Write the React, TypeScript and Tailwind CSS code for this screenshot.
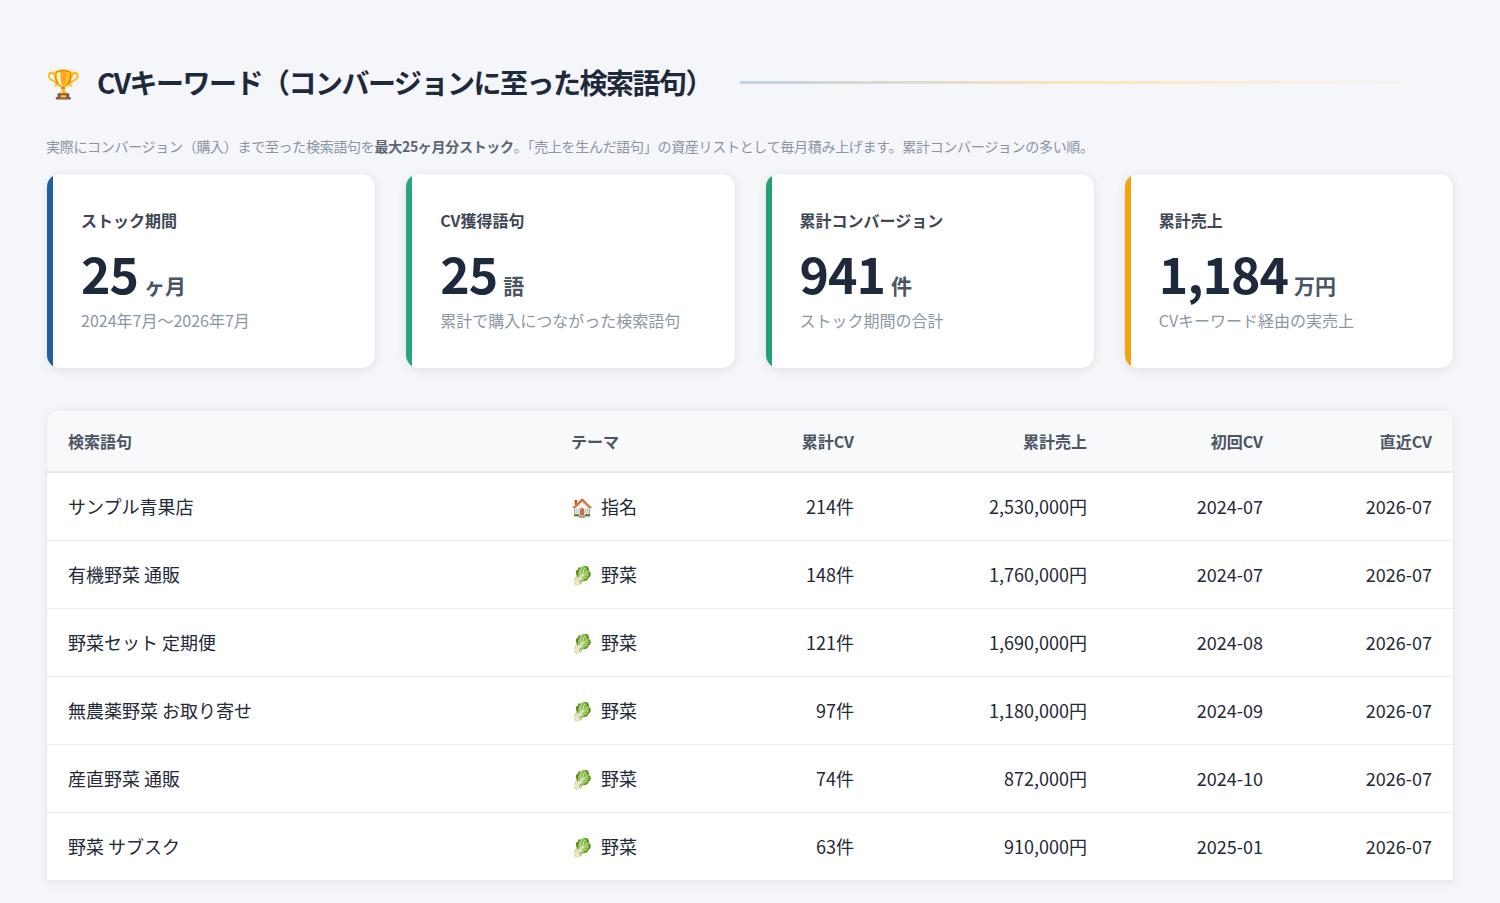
import React from "react";

const cards = [
  { label: "ストック期間", value: "25", unit: "ヶ月", sub: "2024年7月〜2026年7月", color: "bg-[#1d5fa0]" },
  { label: "CV獲得語句", value: "25", unit: "語", sub: "累計で購入につながった検索語句", color: "bg-[#2aa57a]" },
  { label: "累計コンバージョン", value: "941", unit: "件", sub: "ストック期間の合計", color: "bg-[#23a06f]" },
  { label: "累計売上", value: "1,184", unit: "万円", sub: "CVキーワード経由の実売上", color: "bg-[#f0a30a]" },
];

const rows = [
  ["サンプル青果店", "🏠", "指名", "214件", "2,530,000円", "2024-07", "2026-07"],
  ["有機野菜 通販", "🥬", "野菜", "148件", "1,760,000円", "2024-07", "2026-07"],
  ["野菜セット 定期便", "🥬", "野菜", "121件", "1,690,000円", "2024-08", "2026-07"],
  ["無農薬野菜 お取り寄せ", "🥬", "野菜", "97件", "1,180,000円", "2024-09", "2026-07"],
  ["産直野菜 通販", "🥬", "野菜", "74件", "872,000円", "2024-10", "2026-07"],
  ["野菜 サブスク", "🥬", "野菜", "63件", "910,000円", "2025-01", "2026-07"],
];

export default function App() {
  return (
    <div className="h-[903px] overflow-hidden bg-[#f4f6f9] px-[46px] pt-[62px] text-[#1f2937]" style={{ fontFamily: '"Noto Sans CJK JP", "Noto Sans", sans-serif' }}>
      <div className="flex items-center h-[40px]">
        <span className="text-[28px] leading-none mr-[16px]">🏆</span>
        <h1 className="text-[28px] font-bold text-[#1e293b] tracking-[-1.5px] whitespace-nowrap">CVキーワード（コンバージョンに至った検索語句）</h1>
        <div className="ml-[28px] mr-[20px] flex-1 h-[3px] rounded-full bg-gradient-to-r from-[#c2d2e1] via-[#fbe7b5] to-transparent" />
      </div>
      <p className="mt-[34px] text-[14px] text-[#8a94a3] tracking-[-0.3px] whitespace-nowrap">
        実際にコンバージョン（購入）まで至った検索語句を<b className="text-[#5b6472]">最大25ヶ月分ストック</b>。「売上を生んだ語句」の資産リストとして毎月積み上げます。累計コンバージョンの多い順。
      </p>
      <div className="mt-[16px] grid grid-cols-4 gap-[29px]">
        {cards.map((c) => (
          <div key={c.label} className="relative h-[196px] bg-white rounded-[14px] shadow-[0_2px_10px_rgba(15,23,42,0.07)] border border-[#e6eaf0] overflow-hidden pl-[34px] pt-[34px]">
            <div className={`absolute left-0 top-0 bottom-0 w-[6px] ${c.color}`} />
            <div className="text-[16px] font-semibold text-[#3f4754]">{c.label}</div>
            <div className="mt-[10px] flex items-baseline">
              <span className="text-[50px] font-bold text-[#1e293b] leading-[60px] tracking-[-1px]">{c.value}</span>
              <span className="ml-[6px] text-[21px] font-bold text-[#4b5563]">{c.unit}</span>
            </div>
            <div className="mt-[6px] text-[16px] text-[#8d96a4]">{c.sub}</div>
          </div>
        ))}
      </div>
      <div className="mt-[40px] bg-white rounded-t-[14px] border border-[#e6eaf0] overflow-hidden shadow-[0_2px_10px_rgba(15,23,42,0.05)]">
        <div className="grid grid-cols-[500px_160px_126px_233px_176px_1fr] h-[63px] items-center bg-[#f7f9fb] border-b-2 border-[#e5e9ef] px-[21px] text-[16px] font-semibold text-[#4b5563]">
          <div>検索語句</div>
          <div className="pl-[3px]">テーマ</div>
          <div className="text-right">累計CV</div>
          <div className="text-right">累計売上</div>
          <div className="text-right">初回CV</div>
          <div className="text-right">直近CV</div>
        </div>
        {rows.map((r) => (
          <div key={r[0]} className="grid grid-cols-[500px_160px_126px_233px_176px_1fr] h-[68px] items-center border-b border-[#e9edf2] px-[21px] text-[18px] text-[#1f2937]">
            <div>{r[0]}</div>
            <div className="flex items-center gap-[8px] pl-[3px]"><span className="text-[18px]">{r[1]}</span>{r[2]}</div>
            <div className="text-right">{r[3]}</div>
            <div className="text-right">{r[4]}</div>
            <div className="text-right">{r[5]}</div>
            <div className="text-right">{r[6]}</div>
          </div>
        ))}
      </div>
    </div>
  );
}
